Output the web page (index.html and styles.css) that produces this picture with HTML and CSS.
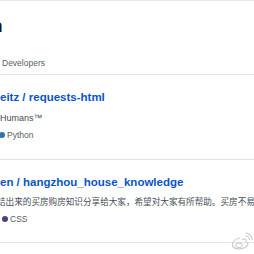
FILE: index.html
```html
<!DOCTYPE html>
<html lang="zh">
<head>
  <meta charset="UTF-8">
  <title>Trending</title>
  <link rel="stylesheet" href="styles.css">
</head>
<body>
  <div class="page">
    <div class="header">
      <div class="title"><span class="cut">n</span></div>
      <div class="subtitle">Developers</div>
    </div>

    <div class="repo first">
      <div class="repo-name">eitz / requests-html</div>
      <div class="repo-desc">Humans™</div>
      <div class="repo-lang"><span class="dot python"></span>Python</div>
    </div>

    <div class="repo second">
      <div class="repo-name">en / hangzhou_house_knowledge</div>
      <div class="repo-desc cn">结出来的买房购房知识分享给大家，希望对大家有所帮助。买房不易</div>
      <div class="repo-lang"><span class="dot css"></span>CSS</div>
    </div>
  </div>

  <svg class="watermark" width="22" height="19" viewBox="0 0 22 19">
    <path d="M9 6 C4 7 1 10 1.5 13.5 C2.5 17.5 10 17.5 14 15.5 C18 13.5 17.5 10.5 15.5 10 C14.5 9.5 16 7.5 14 7 C12.5 6.8 11 7.5 11 7.5" fill="none" stroke="#c9c9c9" stroke-width="1.1"/>
    <ellipse cx="8" cy="13.3" rx="3.4" ry="2.3" fill="none" stroke="#c9c9c9" stroke-width="1"/>
    <path d="M14.5 4 A4 4 0 0 1 18.5 8" fill="none" stroke="#c9c9c9" stroke-width="1.1"/>
    <path d="M14.5 1 A7 7 0 0 1 21.3 8" fill="none" stroke="#c9c9c9" stroke-width="1.1"/>
  </svg>
</body>
</html>
```

FILE: styles.css
```css
body {
  margin: 0;
  font-family: 'Liberation Sans', Arial, 'Noto Sans CJK SC', sans-serif;
  background-color: #ffffff;
  color: #24292e;
  overflow: hidden;
  width: 254px;
  height: 254px;
  position: relative;
}
.page {
  border-top: 1px solid #e8eaed;
}
.header {
  height: 74px;
  box-sizing: border-box;
  padding-top: 14px;
  border-bottom: 1px solid #e1e4e8;
}
.title {
  font-size: 19px;
  font-weight: 700;
  line-height: 22px;
  color: #111;
}
.title .cut {
  display: inline-block;
  margin-left: -9px;
}
.subtitle {
  margin-top: 20px;
  margin-left: 2px;
  font-size: 8.5px;
  line-height: 12px;
  color: #586069;
}
.repo {
  padding: 15px 0 18px;
  border-bottom: 1px solid #e1e4e8;
}
.repo.first {
  padding-bottom: 19px;
}
.repo-name {
  font-size: 11.5px;
  font-weight: 700;
  line-height: 14px;
  color: #0a55c8;
  white-space: nowrap;
}
.repo-desc {
  margin-top: 8px;
  font-size: 9px;
  line-height: 12px;
  color: #444d56;
  white-space: nowrap;
}
.repo-desc.cn {
  font-size: 8.6px;
  margin-left: -3px;
  margin-top: 7px;
}
.repo-lang {
  margin-top: 6px;
  font-size: 8.5px;
  line-height: 10px;
  color: #586069;
  display: flex;
  align-items: center;
  gap: 2px;
}
.first .repo-lang {
  margin-left: -1px;
}
.second .repo-lang {
  margin-left: 2px;
}
.dot {
  width: 6px;
  height: 6px;
  border-radius: 50%;
}
.python {
  background-color: #3572a5;
}
.css {
  background-color: #563d7c;
}
.watermark {
  position: absolute;
  left: 231px;
  top: 232px;
}
```
